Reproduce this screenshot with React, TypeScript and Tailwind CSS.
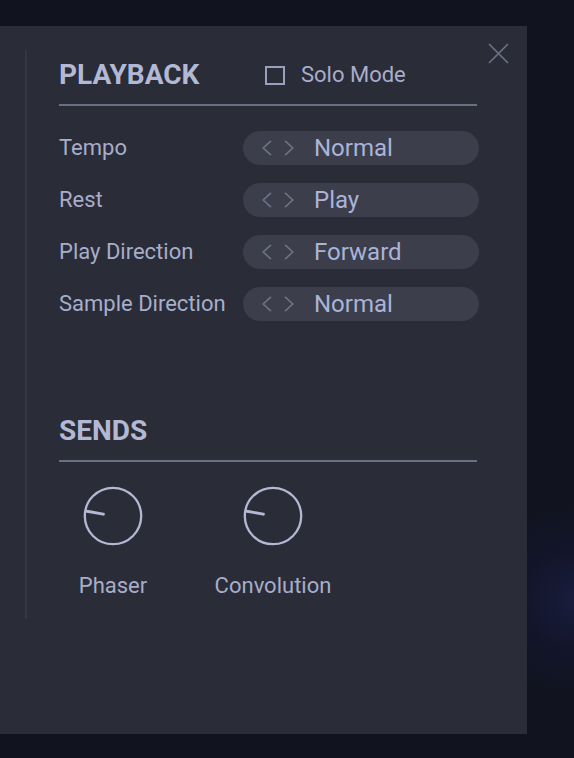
import React from "react";

const rows = [
  { label: "Tempo", value: "Normal" },
  { label: "Rest", value: "Play" },
  { label: "Play Direction", value: "Forward" },
  { label: "Sample Direction", value: "Normal" },
];

function Chevrons() {
  return (
    <div className="flex items-center gap-[12px]">
      <svg width="10" height="16" viewBox="0 0 10 16" fill="none">
        <path d="M9 0.8 L1.2 8 L9 15.2" stroke="#6f7387" strokeWidth="1.6" />
      </svg>
      <svg width="10" height="16" viewBox="0 0 10 16" fill="none">
        <path d="M1 0.8 L8.8 8 L1 15.2" stroke="#6f7387" strokeWidth="1.6" />
      </svg>
    </div>
  );
}

function Knob({ label }: { label: string }) {
  return (
    <div className="flex flex-col items-center">
      <svg width="60" height="60" viewBox="0 0 60 60" fill="none">
        <circle cx="30" cy="30" r="28.2" stroke="#b4b8d2" strokeWidth="2.3" />
        <path d="M21.6 28.4 L2.6 25" stroke="#b4b8d2" strokeWidth="2.8" />
      </svg>
      <div className="mt-[24px] whitespace-nowrap text-[22px] leading-[32px] text-[#a7aecb]">
        {label}
      </div>
    </div>
  );
}

export default function App() {
  return (
    <div className="w-[574px] h-[758px] overflow-hidden bg-[#11131e] bg-[radial-gradient(circle_at_574px_600px,#191c3c_0px,#13162c_45px,#11131e_100px)] pt-[26px] font-['Roboto',sans-serif]">
      <div className="relative w-[527px] h-[708px] bg-[#2a2c37] pt-[24px]">
        <button className="absolute right-[18px] top-[17px]">
          <svg width="21" height="21" viewBox="0 0 21 21" fill="none">
            <path d="M1 1 L20 20 M20 1 L1 20" stroke="#6d7185" strokeWidth="1.7" />
          </svg>
        </button>
        <div className="flex">
          <div className="ml-[25px] w-[2px] h-[569px] bg-[#343642]" />
          <div className="ml-[32px] w-[420px] pt-[9px]">
            <div className="flex items-center h-[32px]">
              <div className="w-[206px] text-[28px] leading-[32px] font-bold text-[#b3b9d5]">
                PLAYBACK
              </div>
              <div className="w-[20px] h-[19px] border-2 border-[#9a9fbb]" />
              <div className="ml-[16px] text-[22px] leading-[32px] text-[#a7aecb]">Solo Mode</div>
            </div>
            <div className="mt-[13px] w-[418px] h-[2px] bg-[#6b6f82]" />
            <div className="mt-[25px] flex flex-col gap-[18px]">
              {rows.map((r) => (
                <div key={r.label} className="flex items-center">
                  <div className="w-[184px] text-[22px] leading-[32px] text-[#a7aecb] whitespace-nowrap">
                    {r.label}
                  </div>
                  <div className="flex items-center w-[236px] h-[34px] rounded-full bg-[#3c3e4b] pl-[19px]">
                    <Chevrons />
                    <div className="ml-[20px] text-[24px] leading-[32px] text-[#aab3d8]">{r.value}</div>
                  </div>
                </div>
              ))}
            </div>
            <div className="mt-[94px] h-[32px] text-[28px] leading-[32px] font-bold text-[#b3b9d5]">
              SENDS
            </div>
            <div className="mt-[13px] w-[418px] h-[2px] bg-[#6b6f82]" />
            <div className="mt-[24px] flex">
              <div className="w-[108px] flex justify-center">
                <Knob label="Phaser" />
              </div>
              <div className="ml-[46px] w-[120px] flex justify-center">
                <Knob label="Convolution" />
              </div>
            </div>
          </div>
        </div>
      </div>
    </div>
  );
}
